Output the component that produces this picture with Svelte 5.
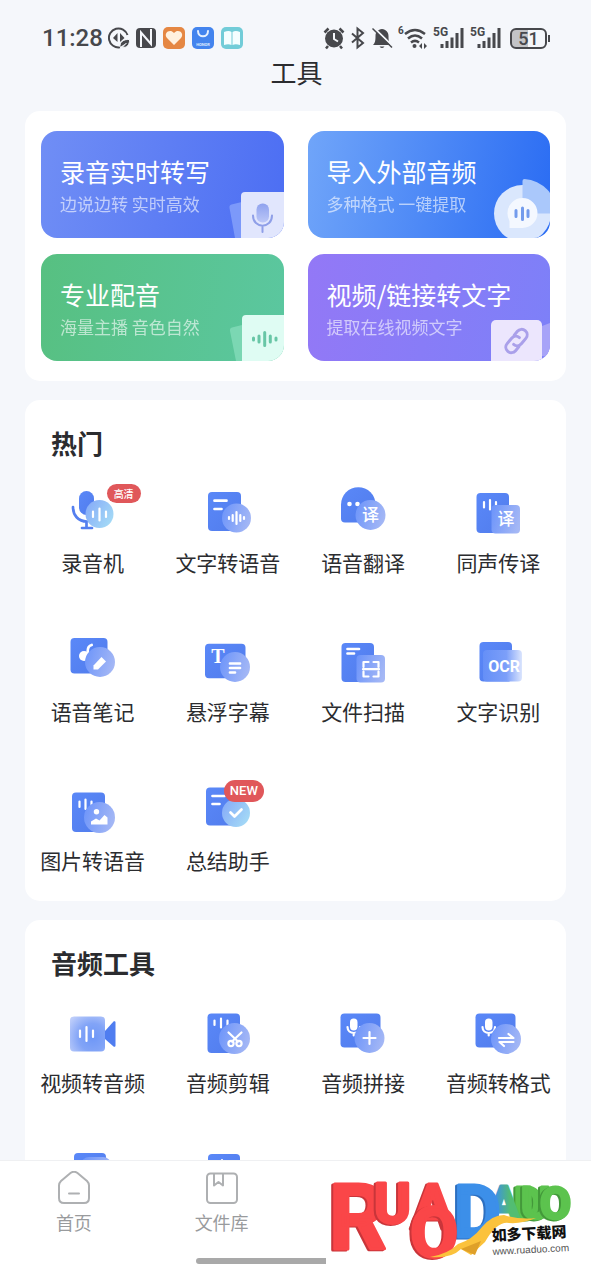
<script lang="ts">
  type Tool = { icon: string; label: string; badge?: string };

  const heroes = [
    { theme: "blue", art: "mic", title: "录音实时转写", note: "边说边转 实时高效" },
    { theme: "sky", art: "disc", title: "导入外部音频", note: "多种格式 一键提取" },
    { theme: "green", art: "wave", title: "专业配音", note: "海量主播 音色自然" },
    { theme: "purple", art: "link", title: "视频/链接转文字", note: "提取在线视频文字" }
  ];

  const sections: { title: string; tools: Tool[] }[] = [
    {
      title: "热门",
      tools: [
        { icon: "recorder", label: "录音机", badge: "高清" },
        { icon: "tts", label: "文字转语音" },
        { icon: "translate", label: "语音翻译" },
        { icon: "interpret", label: "同声传译" },
        { icon: "note", label: "语音笔记" },
        { icon: "subtitle", label: "悬浮字幕" },
        { icon: "scan", label: "文件扫描" },
        { icon: "ocr", label: "文字识别" },
        { icon: "picture", label: "图片转语音" },
        { icon: "summary", label: "总结助手", badge: "NEW" }
      ]
    },
    {
      title: "音频工具",
      tools: [
        { icon: "video", label: "视频转音频" },
        { icon: "cut", label: "音频剪辑" },
        { icon: "join", label: "音频拼接" },
        { icon: "convert", label: "音频转格式" },
        { icon: "stack", label: "" },
        { icon: "sheet", label: "" }
      ]
    }
  ];
</script>

{#snippet toolIcon(name: string)}
  <svg class="tool-icon" viewBox="0 0 48 48" aria-hidden="true">
    {#if name === "recorder"}
      <rect x="10" y="5" width="15" height="24" rx="7.500" fill="url(#base)" />
      <path d="M4 21c0 8 5 14.500 14 14.500M17.500 36v6M13 42h10" class="line blue-line" />
      <circle cx="30.500" cy="28" r="14" fill="url(#cyan)" />
      <path d="M24 25.500v5.500M30.500 22.500v12M37 25.500v5.500" class="line thin" />
    {:else if name === "tts"}
      <rect x="4" y="6" width="33" height="39" rx="4" fill="url(#base)" />
      <path d="M10.500 14.700h12M10.500 23h7" class="line" />
      <circle cx="32.500" cy="32" r="14.500" fill="url(#glass)" />
      <path d="M25 31v2M28.700 29v6M32.500 26v12M36.300 29v6M40 31v2" class="line thin" />
    {:else if name === "translate"}
      <path d="M2 18.500a17.300 17.300 0 0 1 34.600 0V36.500H6a4 4 0 0 1-4-4z" fill="url(#base)" />
      <circle cx="10.500" cy="18" r="2.300" fill="#fff" />
      <circle cx="18.500" cy="18" r="2.300" fill="#fff" />
      <circle cx="31.500" cy="29" r="15" fill="url(#glass)" />
      <text x="31.500" y="34.500" class="glyph">译</text>
    {:else if name === "interpret"}
      <rect x="2.500" y="7" width="32.500" height="40" rx="4" fill="url(#base)" />
      <path d="M10 16v5.500M16 14v9.500M22 16v5.500" class="line thin" />
      <rect x="17.500" y="19" width="28.500" height="28.500" rx="4" fill="url(#glass)" />
      <text x="32" y="38.500" class="glyph">译</text>
    {:else if name === "note"}
      <rect x="1.500" y="3" width="37" height="35.500" rx="4" fill="url(#base)" />
      <circle cx="15" cy="21" r="5" fill="#fff" />
      <path d="M18.700 21v-5c0-3 .5-5 4-6" class="line" />
      <circle cx="31" cy="27" r="15" fill="url(#glass)" />
      <path d="M24.500 34.500v-4l8-8.500 4.500 4.500-8 8z" fill="#fff" />
    {:else if name === "subtitle"}
      <rect x="1" y="8.700" width="40.500" height="34.500" rx="4" fill="url(#base)" />
      <text x="14" y="28" class="serif">T</text>
      <circle cx="31" cy="32" r="15" fill="url(#glass)" />
      <path d="M26 28.500h10M26 33h10M26 37.500h5" class="line" />
    {:else if name === "scan"}
      <rect x="2.500" y="8" width="32.500" height="39" rx="4" fill="url(#base)" />
      <path d="M8.500 14H20M8.500 18.500H15" class="line" />
      <rect x="17.500" y="20" width="28.500" height="27.500" rx="4" fill="url(#glass)" />
      <path d="M29.500 27h-5v5M34.500 27h5v5M24.500 36.500v5h5M39.500 36.500v5h-5M24 34.200h16" class="line thin" />
    {:else if name === "ocr"}
      <rect x="5.500" y="7" width="32.500" height="39.500" rx="4" fill="url(#base)" />
      <rect x="9" y="15" width="39" height="31.500" rx="4" fill="url(#fade)" />
      <text x="30" y="36.500" class="ocr">OCR</text>
    {:else if name === "picture"}
      <rect x="3" y="8.500" width="33" height="39.500" rx="4" fill="url(#base)" />
      <path d="M10.500 17.500v5.500M16.500 15.500v9.500M22.500 17.500v5.500" class="line thin" />
      <circle cx="30.500" cy="33.500" r="15.500" fill="url(#glass)" />
      <circle cx="27.500" cy="27.700" r="2.700" fill="#fff" />
      <path d="M22 40.500v-3l5-3 3.500 2 5-5.500 3 2.500v7z" fill="#fff" />
    {:else if name === "summary"}
      <rect x="2" y="3.500" width="33" height="38" rx="4" fill="url(#base)" />
      <path d="M8.500 12h12M8.500 20h7" class="line" />
      <circle cx="32" cy="29" r="14" fill="url(#cyan)" />
      <path d="M26.500 28.500l4 4 7-7" class="line" />
    {:else if name === "video"}
      <path d="M36 25l8.500-9.500c1-.7 2-.3 2 1v23c0 1.300-1 1.700-2 1L36 33z" fill="#4f7df0" />
      <rect x="1" y="10.500" width="35" height="35" rx="4" fill="url(#soft)" />
      <path d="M11 24.500v6.500M17.500 21v14M24 24.500v6.500" class="line thin" />
    {:else if name === "cut"}
      <rect x="3.500" y="7.500" width="32.500" height="39.500" rx="4" fill="url(#base)" />
      <path d="M10.500 14.500v4.500M17 12.500v9M23.500 14.500v4.500" class="line thin" />
      <circle cx="30.500" cy="32.500" r="15.500" fill="url(#glass)" />
      <path d="M24.500 26.500l9.500 9M37.500 26.500l-9.500 9" class="line thin" />
      <circle cx="27" cy="37.500" r="2.600" class="line thin" />
      <circle cx="35" cy="37.500" r="2.600" class="line thin" />
    {:else if name === "join" || name === "convert"}
      <rect x="1.500" y="7.500" width="40" height="34" rx="4" fill="url(#base)" />
      <rect x="11" y="12.500" width="7.500" height="12" rx="3.700" fill="#fff" />
      <path d="M8.500 21c0 8 12.500 8 12.500 0M14.700 27v2.500" class="line thin" />
      {#if name === "join"}
        <circle cx="30.500" cy="32" r="15" fill="url(#glass)" />
        <path d="M30.500 26v12M24.500 32h12" class="line thin" />
      {:else}
        <circle cx="32" cy="33" r="15" fill="url(#glass)" />
        <path d="M25 32h14.500l-5-4M39.500 36h-14l4.500 4" class="line thin" />
      {/if}
    {:else if name === "stack"}
      <rect x="5" y="-2" width="32" height="40" rx="4" fill="url(#base)" />
      <rect x="12" y="2" width="30" height="30" rx="8" fill="url(#glass)" />
    {:else}
      <rect x="4" y="-1" width="32" height="40" rx="4" fill="url(#base)" />
      <path d="M18 5v9" class="line thin" />
    {/if}
  </svg>
{/snippet}

{#snippet heroArt(name: string)}
  <svg class="hero-art" viewBox="0 0 64 64" aria-hidden="true">
    {#if name === "mic"}
      <path d="M9.500 34q-.5-3 2-3.500L30 26v38H15z" fill="#7c99fa" />
      <rect x="21" y="18" width="48" height="50" rx="4" fill="#e1e6fd" />
      <rect x="36.500" y="29.500" width="12.500" height="19" rx="6" fill="url(#mic)" />
      <path d="M33 41.500c0 13.500 19 13.500 19 0M42.500 52v6" fill="none" stroke="#8f9fe8" stroke-width="2" stroke-linecap="round" />
    {:else if name === "disc"}
      <circle cx="36.500" cy="39.500" r="28.500" fill="#dae7fd" />
      <path d="M36.500 39.500V7q0-2 2-2a34 34 0 0 1 32 34.500z" fill="#aac8fb" />
      <path d="M21.500 39a15 15 0 1 1 15 15H23.500v-7a15 15 0 0 1-2-8z" fill="#f4f8ff" />
      <path d="M30 36.500v6M36.500 34v11.500M42 36.500v6" fill="none" stroke="#739bec" stroke-width="3" stroke-linecap="round" />
    {:else if name === "wave"}
      <path d="M10 34q-.5-3 2-3.500L30 26v38H16z" fill="#7bd7b3" />
      <rect x="22" y="18" width="48" height="50" rx="4" fill="#dffcf3" />
      <path d="M33.500 41v2M39 39v6M44.700 35.500v13M50.300 39v6M56 41v2" fill="none" stroke="#68c6a6" stroke-width="3" stroke-linecap="round" />
    {:else}
      <path d="M50 30q9-1 16-5v36l-10-2z" fill="#a7a3f8" />
      <rect x="5" y="23" width="51" height="46" rx="5" fill="#ece6fd" />
      <g transform="rotate(-50 30.500 44)" fill="none" stroke="#aaa0ea" stroke-width="3" stroke-linecap="round">
        <path d="M27.500 49.500h-5a5.500 5.500 0 0 1 0-11h7a5.500 5.500 0 0 1 5.500 5.500" />
        <path d="M33.500 38.500h5a5.500 5.500 0 0 1 0 11h-7a5.500 5.500 0 0 1-5.500-5.500" />
      </g>
    {/if}
  </svg>
{/snippet}

{#snippet signal()}
  <svg width="32" height="24" viewBox="0 0 32 24">
    <text x="0" y="10" class="net">5G</text>
    <path d="M9 22v-4M14 22v-7M19 22V11.500M24 22V7M29 22V2" fill="none" stroke="#47484c" stroke-width="3" />
  </svg>
{/snippet}

<!-- gradients shared by all tool icons -->
<svg class="defs" width="0" height="0" aria-hidden="true">
  <linearGradient id="base" x1="0" y1="0" x2="1" y2="1">
    <stop offset="0" stop-color="#5a88f8" />
    <stop offset="1" stop-color="#517cec" />
  </linearGradient>
  <linearGradient id="glass" x1="0" y1=".3" x2="1" y2=".6">
    <stop offset="0" stop-color="#6f96fa" />
    <stop offset="1" stop-color="#a5b8f5" />
  </linearGradient>
  <linearGradient id="cyan" x1="0" y1=".2" x2="1" y2=".8">
    <stop offset="0" stop-color="#87acf8" />
    <stop offset="1" stop-color="#a5dcf6" />
  </linearGradient>
  <linearGradient id="fade">
    <stop offset="0" stop-color="#658ff7" />
    <stop offset=".6" stop-color="#7c9ff9" />
    <stop offset="1" stop-color="#dbe5fd" />
  </linearGradient>
  <radialGradient id="soft" cx=".65" cy=".6" r=".8">
    <stop offset="0" stop-color="#6e97f7" />
    <stop offset=".5" stop-color="#82a4f7" />
    <stop offset="1" stop-color="#bdcdfa" />
  </radialGradient>
  <linearGradient id="mic" x1="0" y1="0" x2="0" y2="1">
    <stop offset="0" stop-color="#8fa2ee" />
    <stop offset="1" stop-color="#bcc7f7" />
  </linearGradient>
  <linearGradient id="teal">
    <stop offset=".2" stop-color="#3c8fe9" />
    <stop offset=".7" stop-color="#52bd72" />
  </linearGradient>
</svg>

<div class="screen">
  <header>
    <div class="status">
      <div class="status-left">
        <span class="time">11:28</span>
        <svg width="22" height="24" viewBox="0 0 22 24">
          <path d="M19.500 9A9.500 9.500 0 1 0 12 21.300" fill="none" stroke="#47484c" stroke-width="2" />
          <path d="M9.500 7v9L5 12zM12 7v9l4.500-4z" fill="#47484c" />
          <path d="M12 21c-.5-5 3.500-8 9.500-7.500.5 5-3 9-7 7.500l4-4" fill="#47484c" stroke="#f5f7fb" />
        </svg>
        <svg width="22" height="24" viewBox="0 0 22 24">
          <rect x="1" y="2" width="20" height="20" rx="4" fill="#47484c" />
          <path d="M6 21V6.500l10 11.500V3" fill="none" stroke="#f5f7fb" stroke-width="2" />
        </svg>
        <svg width="24" height="24" viewBox="0 0 24 24">
          <rect x="1" y="1" width="22" height="22" rx="5" fill="#e58743" />
          <path d="M12 19L5 12c-4-5 3-10 7-5 4-5 11 0 7 5z" fill="#fff1df" />
        </svg>
        <svg width="24" height="24" viewBox="0 0 24 24">
          <rect x="1" y="1" width="22" height="22" rx="5" fill="#4384ee" />
          <path d="M7 5c0 7 10 7 10 0" fill="none" stroke="#e5f0ff" stroke-width="2" stroke-linecap="round" />
          <text x="12" y="20" class="brand">HONOR</text>
        </svg>
        <svg width="24" height="24" viewBox="0 0 24 24">
          <rect x="1" y="1" width="22" height="22" rx="5" fill="#72ccd8" />
          <path d="M4 6q5-2 7.500 0v13q-3-1.500-7.500 0zM12.500 6q3-2 7.500 0v13q-4.500-1.500-7.500 0z" fill="#f4feff" />
        </svg>
      </div>
      <div class="status-right">
        <svg width="22" height="24" viewBox="0 0 22 24">
          <circle cx="11" cy="12.500" r="9" fill="#47484c" />
          <path d="M1.500 6.500l4-4M20.500 6.500l-4-4M5 20l-2 2.500M17 20l2 2.500" stroke="#47484c" stroke-width="2.500" />
          <path d="M11 7v6l4 2.500" fill="none" stroke="#f5f7fb" stroke-width="2" />
        </svg>
        <svg width="16" height="24" viewBox="0 0 16 24">
          <path d="M2 7.500l11 9.500-5.500 4.500v-19L13 7 2 16.500" fill="none" stroke="#47484c" stroke-width="2" />
        </svg>
        <svg width="22" height="24" viewBox="0 0 22 24">
          <path d="M2 19c2-2 2.500-4 2.500-9 0-4 2.500-6.500 6.500-7 4 .5 6.500 3 6.500 7 0 5 .5 7 2.500 9zM8.500 20.500h5q-2.500 3-5 0z" fill="#47484c" />
          <path d="M2.500 1.500L22 20.500" stroke="#f5f7fb" stroke-width="2" />
          <path d="M1.500 2.500L21 21.500" stroke="#47484c" stroke-width="1.500" />
        </svg>
        <svg width="30" height="24" viewBox="0 0 30 24">
          <text x="0" y="8" class="net small">6</text>
          <g fill="none" stroke="#47484c" stroke-width="2.500">
            <path d="M7 8q10-8 20 0" />
            <path d="M10 12.500q7-6 14 0" />
            <path d="M13 16.500q4-3.200 8 0" />
          </g>
          <circle cx="16.500" cy="20" r="2" fill="#47484c" />
          <path d="M24 17v6l-3-3zM26 17v6l3-3z" fill="#47484c" />
        </svg>
        {@render signal()}
        {@render signal()}
        <span class="battery">51</span>
      </div>
    </div>
    <h1>工具</h1>
  </header>

  <main>
    <section class="card heroes">
      {#each heroes as hero}
        <button class="hero {hero.theme}">
          <strong>{hero.title}</strong>
          <span>{hero.note}</span>
          {@render heroArt(hero.art)}
        </button>
      {/each}
    </section>

    {#each sections as section}
      <section class="card group">
        <h2>{section.title}</h2>
        <div class="tools">
          {#each section.tools as tool}
            <button class="tool">
              <span class="icon-box">
                {@render toolIcon(tool.icon)}
                {#if tool.badge}
                  <em class="badge" class:wide={tool.badge === "NEW"}>{tool.badge}</em>
                {/if}
              </span>
              <span class="label">{tool.label}</span>
            </button>
          {/each}
        </div>
      </section>
    {/each}
  </main>

  <nav>
    <a href="#home">
      <svg width="34" height="34" viewBox="0 0 34 34">
        <path d="M2 14.500q0-2.500 2-4.500l9.500-8q3.500-2.500 7 0L30 10q2 2 2 4.500V27q0 5-5 5H7q-5 0-5-5z" />
        <path d="M12 22.500h10" />
      </svg>
      <span>首页</span>
    </a>
    <a href="#files">
      <svg width="34" height="34" viewBox="0 0 34 34">
        <rect x="2" y="2.500" width="30" height="29.500" rx="3.500" />
        <path d="M9 3v11.500l4.500-3.500 4.500 3.500V3" />
      </svg>
      <span>文件库</span>
    </a>
    <span class="home-bar"></span>
    <svg class="logo" width="265" height="118" viewBox="0 0 265 118">
      <g class="letters">
        <text x="3" y="88" font-size="90" class="logo-red">R</text>
        <text x="48" y="62" font-size="56" class="logo-red">U</text>
        <text x="188" y="58" font-size="45" class="logo-green">D</text>
        <text x="195" y="58" font-size="45" class="logo-green">U</text>
        <text x="214" y="58" font-size="45" class="logo-green">O</text>
        <text x="162" y="58" font-size="47" class="logo-teal">A</text>
        <text x="128" y="76" font-size="72" class="logo-blue">D</text>
        <text x="86" y="67" font-size="62" class="logo-red">A</text>
        <text x="84" y="96" font-size="70" class="logo-red">O</text>
      </g>
      <path d="M104 96q18-3 28-13 14-4 24-17 10-12 22-12 16 5 32 3-14 6-27 5-12-2-24 19l-14 13-10-6q-10 10-31 8z" fill="#fbc23c" />
      <path d="M135 88l14 6 6-14z" fill="#dfa029" />
      <g transform="rotate(-3 166 82)">
        <text x="166" y="80" class="logo-cn">如多下载网</text>
        <text x="166" y="94" class="logo-url">www.ruaduo.com</text>
      </g>
    </svg>
  </nav>
</div>

<style>
  :global(body) {
    margin: 0;
    background: #f5f7fb;
    font-family: "Noto Sans CJK SC", sans-serif;
  }

  .defs {
    position: absolute;
  }

  .screen {
    display: flex;
    flex-direction: column;
    height: 100vh;
    color: #2b2c2f;
  }

  button {
    border: none;
    padding: 0;
    background: none;
    font: inherit;
    color: inherit;
    cursor: pointer;
  }

  header {
    padding: 26px 40px 25px 42px;
  }

  .status,
  .status-left,
  .status-right {
    display: flex;
    align-items: center;
  }

  .status {
    justify-content: space-between;
    height: 24px;
    font-family: Roboto, sans-serif;
    color: #47484c;
  }

  .status-left,
  .status-right {
    gap: 5px;
  }

  .time {
    font-size: 24px;
    font-weight: 500;
  }

  .net {
    font: 700 12px Roboto, sans-serif;
    fill: #47484c;
  }

  .net.small {
    font-size: 10px;
  }

  .brand {
    font: 700 4px Roboto, sans-serif;
    fill: #dceaff;
    text-anchor: middle;
  }

  .battery {
    position: relative;
    box-sizing: border-box;
    width: 37px;
    height: 21px;
    margin: 0 4px 0 3px;
    border: 2px solid #47484c;
    border-radius: 6px;
    background: linear-gradient(90deg, #c3c4c7 50%, transparent 50%);
    font-size: 18px;
    font-weight: 500;
    line-height: 18px;
    text-align: center;
  }

  .battery::after {
    content: "";
    position: absolute;
    top: 5px;
    right: -5px;
    width: 2px;
    height: 7px;
    background: #47484c;
  }

  h1 {
    margin: 8px 0 0;
    font-size: 26px;
    font-weight: 400;
    line-height: 28px;
    text-align: center;
  }

  main {
    flex: 1;
    min-height: 0;
    display: flex;
    flex-direction: column;
    gap: 19px;
    padding: 0 25px;
    overflow-y: auto;
    scrollbar-width: none;
  }

  .card {
    flex-shrink: 0;
    background: #fff;
    border-radius: 15px;
  }

  .heroes {
    display: grid;
    grid-template-columns: 1fr 1fr;
    gap: 16px 24px;
    padding: 20px 16px;
  }

  .hero {
    position: relative;
    display: flex;
    flex-direction: column;
    gap: 5px;
    min-height: 107px;
    padding: 24px 0 0 19px;
    border-radius: 16px;
    overflow: hidden;
    text-align: left;
    color: #fff;
  }

  .hero strong {
    font-size: 25px;
    font-weight: 400;
    line-height: 32px;
  }

  .hero span {
    font-size: 17px;
    line-height: 24px;
    opacity: 0.6;
  }

  .hero.blue {
    background: linear-gradient(100deg, #708ef5, #4c6ef3);
  }

  .hero.sky {
    background: linear-gradient(100deg, #70a5f9, #2a6cf3);
  }

  .hero.green {
    background: linear-gradient(100deg, #57c081, #5bc7a0);
  }

  .hero.purple {
    background: linear-gradient(100deg, #9378f6, #7d80f8);
  }

  .hero-art {
    position: absolute;
    right: 0;
    bottom: 0;
    width: 64px;
    height: 64px;
  }

  .group {
    padding: 27px 0 23px;
  }

  h2 {
    margin: 0 0 27px;
    padding-left: 26px;
    font-size: 26px;
    font-weight: 700;
    line-height: 32px;
  }

  .tools {
    display: grid;
    grid-template-columns: repeat(4, 1fr);
    row-gap: 55px;
  }

  .tool {
    display: flex;
    flex-direction: column;
    align-items: center;
    gap: 12px;
  }

  .icon-box {
    position: relative;
    height: 48px;
  }

  .tool-icon {
    width: 48px;
    height: 48px;
    overflow: visible;
  }

  .label {
    height: 34px;
    font-size: 21px;
    line-height: 32px;
    white-space: nowrap;
  }

  .line {
    fill: none;
    stroke: #fff;
    stroke-width: 2.7;
    stroke-linecap: round;
    stroke-linejoin: round;
  }

  .thin {
    stroke-width: 2.2;
  }

  .blue-line {
    stroke: #547fef;
  }

  .glyph {
    font-size: 17px;
    font-weight: 500;
    fill: #fff;
    text-anchor: middle;
  }

  .serif {
    font: 700 20px "Liberation Serif", serif;
    fill: #fff;
    text-anchor: middle;
  }

  .ocr {
    font: 700 16px Roboto, sans-serif;
    fill: #fff;
    text-anchor: middle;
  }

  .badge {
    position: absolute;
    top: -2px;
    left: 38px;
    width: 34px;
    border-radius: 11px;
    background: #e0575a;
    color: #fff;
    font-size: 10px;
    font-style: normal;
    font-weight: 500;
    line-height: 19px;
    text-align: center;
  }

  .badge.wide {
    top: -4px;
    left: 20px;
    width: 40px;
    font-family: Roboto, sans-serif;
    font-size: 13px;
    line-height: 22px;
  }

  nav {
    position: relative;
    display: grid;
    grid-template-columns: repeat(4, 1fr);
    height: 119px;
    border-top: 1px solid #eff0f2;
    box-sizing: border-box;
    background: #fff;
  }

  nav a {
    display: flex;
    flex-direction: column;
    align-items: center;
    gap: 5px;
    padding-top: 10px;
    color: #999b9d;
    font-size: 18px;
    line-height: 24px;
    text-decoration: none;
  }

  nav a svg {
    fill: none;
    stroke: #aeb0b2;
    stroke-width: 2;
    stroke-linecap: round;
    stroke-linejoin: round;
  }

  .home-bar {
    position: absolute;
    left: 50%;
    bottom: 15px;
    width: 200px;
    height: 6px;
    border-radius: 3px;
    background: #a9a9a9;
    transform: translateX(-50%);
  }

  .logo {
    position: absolute;
    right: 0;
    bottom: 0;
    background: #fff;
  }

  .letters {
    font-family: Roboto, sans-serif;
    font-weight: 700;
  }

  .letters text {
    stroke-width: 3;
    stroke-linejoin: round;
  }

  .logo-red {
    fill: #fa4648;
    stroke: #fa4648;
    filter: drop-shadow(-2px 1px 0 #c9353a);
  }

  .logo-blue {
    fill: #3c8fe9;
    stroke: #3c8fe9;
    filter: drop-shadow(-2px 1px 0 #2c6fc0);
  }

  .logo-teal {
    fill: url(#teal);
    stroke: url(#teal);
  }

  .logo-green {
    fill: #5cc34e;
    stroke: #5cc34e;
    filter: drop-shadow(-2px 1px 0 #43993a);
  }

  .logo-cn {
    font-size: 15px;
    font-weight: 900;
    fill: #111;
  }

  .logo-url {
    font: 400 10px "Liberation Sans", sans-serif;
    fill: #555;
  }
</style>
